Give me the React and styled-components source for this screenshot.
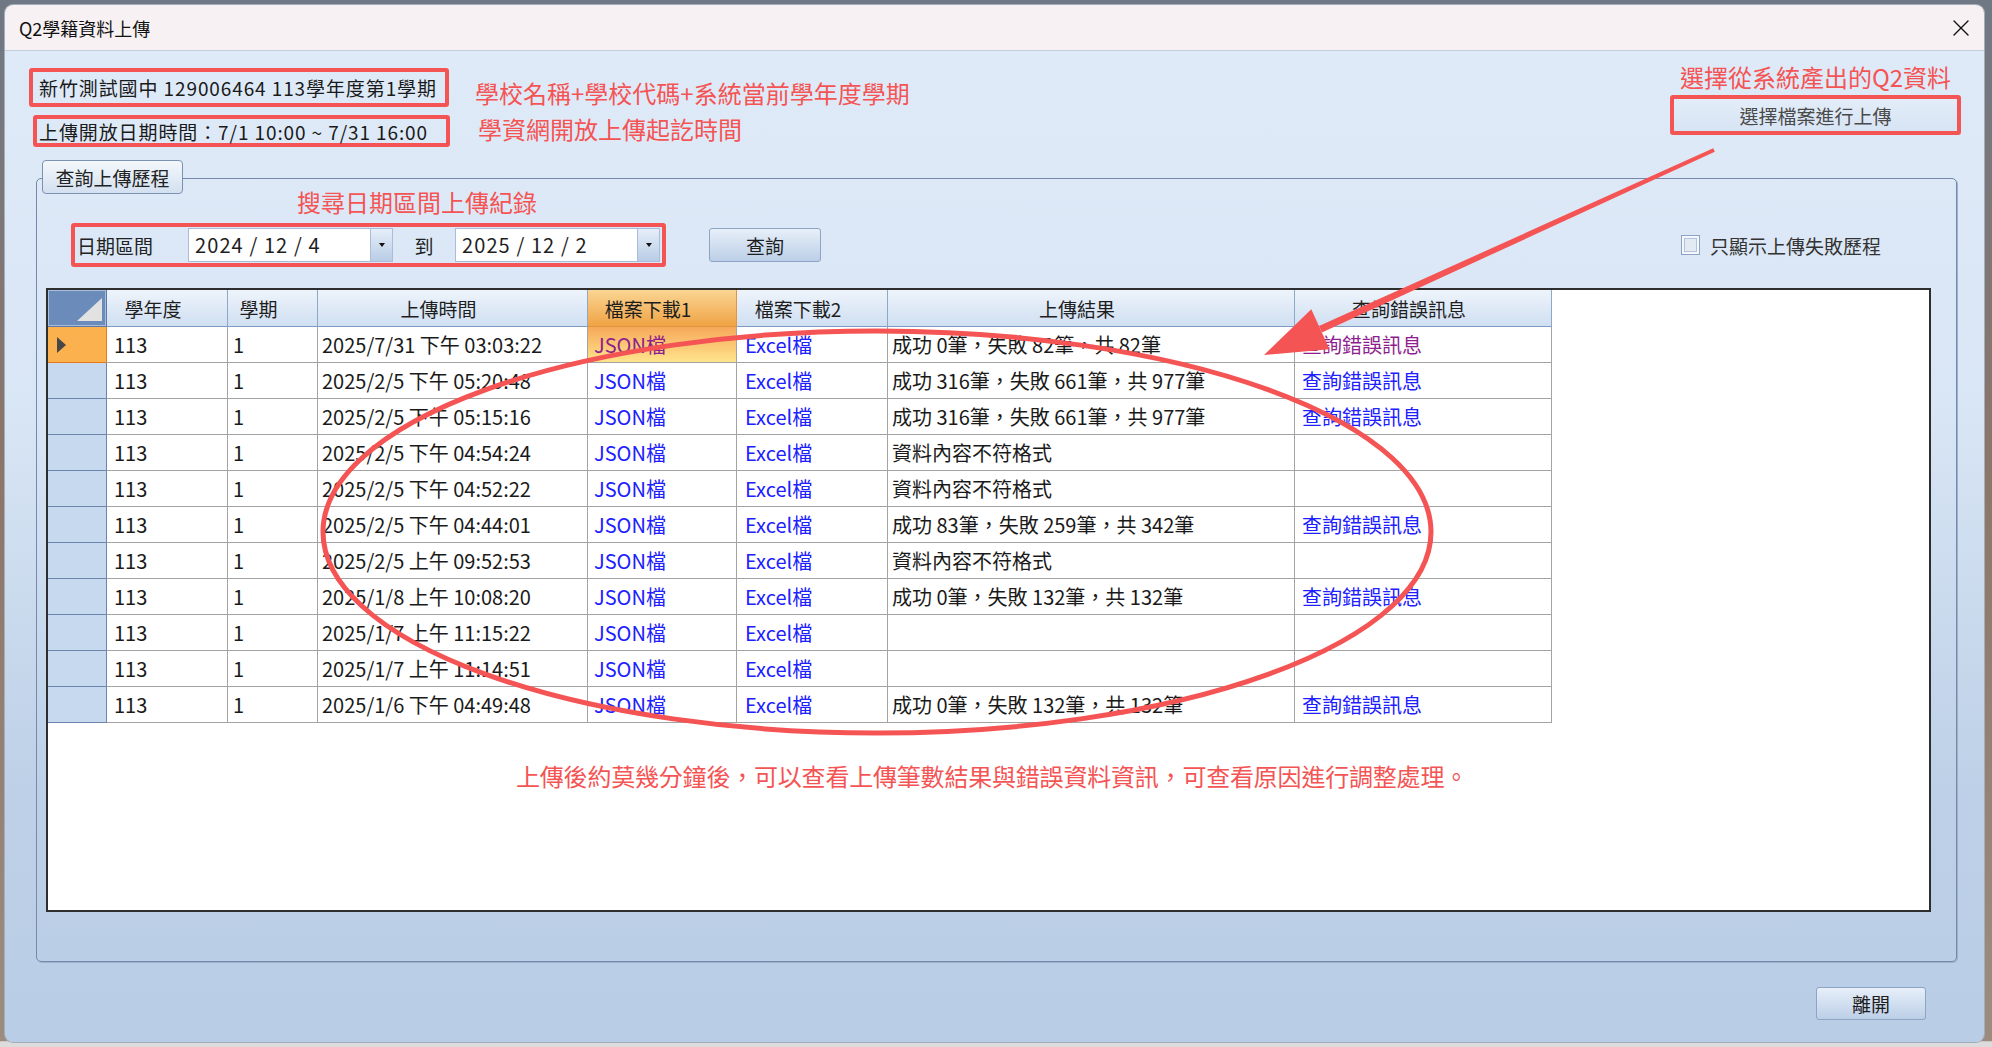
import React from "react";
import styled, { createGlobalStyle } from "styled-components";
import { X } from "lucide-react";

const RED = "#f45454";
const FONT = `"Noto Sans CJK TC", "Noto Sans", sans-serif`;

const GlobalStyle = createGlobalStyle`
  html, body { margin: 0; padding: 0; }
  body { font-family: ${FONT}; }
  * { box-sizing: border-box; }
`;

const Desktop = styled.div`
  width: 1992px;
  height: 1047px;
  padding: 5px 8px 5px 5px;
  display: flex;
  background: linear-gradient(180deg, #6f7884 0%, #8c7569 45%, #9c8c80 99.4%, #dcdcdc 99.5%);
  overflow: hidden;
`;

const Window = styled.div`
  flex: 1;
  display: flex;
  flex-direction: column;
  border-radius: 8px;
  overflow: hidden;
  box-shadow: 0 0 0 1px #a4aebb;
`;

const TitleBar = styled.div`
  height: 46px;
  flex: none;
  display: flex;
  align-items: center;
  justify-content: space-between;
  padding: 0 9px 0 14px;
  background: #f7f1f3;
  border-bottom: 1px solid #c3cedc;
  font-size: 18px;
  color: #111;
`;

const Body = styled.div`
  flex: 1;
  position: relative;
  display: flex;
  flex-direction: column;
  background: linear-gradient(180deg, #dfeaf8 0%, #d9e6f5 35%, #bdd0e7 75%, #b9cde6 100%);
`;

const Header = styled.div`
  display: flex;
  justify-content: space-between;
  align-items: flex-start;
  padding: 0 23px 0 24px;
`;

const LeftCol = styled.div`
  padding-top: 17px;
  display: flex;
  flex-direction: column;
  gap: 8px;
`;

const InfoRow = styled.div`
  display: flex;
  align-items: center;
`;

const InfoBox = styled.div`
  width: ${(p) => p.$w}px;
  height: ${(p) => p.$h}px;
  margin-left: ${(p) => p.$ml || 0}px;
  border: 4px solid ${RED};
  border-radius: 3px;
  padding-left: ${(p) => p.$pl}px;
  display: flex;
  align-items: center;
  font-size: 19px;
  letter-spacing: 0.9px;
  color: #1a1a1a;
  white-space: nowrap;
`;

const Note = styled.div`
  font-size: 24px;
  line-height: 28px;
  color: ${RED};
  white-space: nowrap;
  margin-left: ${(p) => p.$ml || 0}px;
  margin-top: ${(p) => p.$mt || 0}px;
`;

const RightCol = styled.div`
  padding-top: 12px;
  width: 291px;
  display: flex;
  flex-direction: column;
  align-items: center;
  gap: 4px;
`;

const SelectBox = styled.div`
  width: 291px;
  height: 40px;
  border: 4px solid ${RED};
  border-radius: 3px;
  display: flex;
  align-items: center;
  justify-content: center;
  font-size: 19px;
  color: #4a4a4a;
  background: linear-gradient(180deg, #e3edf9, #d7e4f4);
`;

const Group = styled.div`
  position: relative;
  margin: 13px 27px 0 31px;
  padding-top: 18px;
`;

const Tab = styled.div`
  position: absolute;
  top: 0;
  left: 6px;
  width: 141px;
  height: 34px;
  border: 1px solid #7d92b3;
  border-radius: 4px;
  background: linear-gradient(180deg, #f4f8fc, #d3e0f0);
  display: flex;
  align-items: center;
  justify-content: center;
  font-size: 19px;
  color: #222;
  z-index: 1;
`;

const Frame = styled.div`
  height: 784px;
  border: 1px solid #7489ab;
  border-radius: 5px;
  box-shadow: 1px 1px 0 #9fb2cc;
  padding: 9px 25px 0 9px;
  display: flex;
  flex-direction: column;
`;

const ToolRow = styled.div`
  margin-top: 7px;
  height: 44px;
  display: flex;
  align-items: center;
`;

const FilterBox = styled.div`
  margin-left: 25px;
  width: 595px;
  height: 44px;
  border: 4px solid ${RED};
  border-radius: 3px;
  display: flex;
  align-items: center;
`;

const FilterLabel = styled.div`
  width: ${(p) => p.$w}px;
  padding-left: ${(p) => p.$pl || 0}px;
  text-align: ${(p) => (p.$center ? "center" : "left")};
  font-size: 19px;
  color: #222;
`;

const DatePicker = styled.div`
  width: 205px;
  height: 34px;
  border: 1px solid #a9bdd8;
  background: #fff;
  display: flex;
`;

const DateText = styled.div`
  flex: 1;
  padding-left: 6px;
  font-size: 20px;
  letter-spacing: 1.1px;
  line-height: 32px;
  color: #1e1e1e;
`;

const DropBtn = styled.div`
  width: 22px;
  border-left: 1px solid #a9bdd8;
  background: linear-gradient(180deg, #e6eef9, #b9cde6);
  display: flex;
  align-items: center;
  justify-content: center;
  &::after {
    content: "";
    border-left: 3px solid transparent;
    border-right: 3px solid transparent;
    border-top: 4px solid #111;
  }
`;

const Button = styled.div`
  width: ${(p) => p.$w}px;
  height: ${(p) => p.$h}px;
  margin-left: ${(p) => p.$ml || 0}px;
  border: 1px solid #8ea4c4;
  border-radius: 3px;
  background: linear-gradient(180deg, #e7eff9, #bccfe7);
  display: flex;
  align-items: center;
  justify-content: center;
  font-size: 19px;
  color: #1e1e1e;
`;

const CheckWrap = styled.div`
  margin-left: 860px;
  display: flex;
  align-items: center;
  gap: 10px;
  font-size: 19px;
  color: #333;
`;

const CheckBox = styled.div`
  width: 19px;
  height: 20px;
  border: 1px solid #8ea4c4;
  background: #e4eaf3;
  box-shadow: inset 0 0 0 2px #f4f7fb, inset 0 0 0 3px #b4c3d8;
`;

const Grid = styled.div`
  margin-top: 21px;
  width: 1885px;
  height: 624px;
  border: 2px solid #2e2e2e;
  background: #fff;
`;

const COLS = "59px 121px 90px 270px 149px 151px 407px 257px";

const HeadRow = styled.div`
  display: grid;
  grid-template-columns: ${COLS};
  height: 37px;
`;

const CornerCell = styled.div`
  background: #6b8cba;
  border-right: 1px solid #5b78a4;
  border-bottom: 1px solid #5b78a4;
  box-shadow: inset 0 0 0 1px #a8bedc;
  display: flex;
  align-items: flex-end;
  justify-content: flex-end;
  padding: 0 4px 5px 0;
`;

const HeadCell = styled.div`
  border-right: 1px solid ${(p) => (p.$active ? "#e0963e" : "#90a8c8")};
  border-bottom: 1px solid ${(p) => (p.$active ? "#e0963e" : "#7f9cc2")};
  background: ${(p) =>
    p.$active
      ? "linear-gradient(180deg, #fad594, #f0a344)"
      : "linear-gradient(180deg, #eef4fb, #d0dff2)"};
  display: flex;
  align-items: center;
  justify-content: center;
  padding-right: 28px;
  font-size: 19px;
  color: #1e1e1e;
  white-space: nowrap;
`;

const DataRow = styled.div`
  display: grid;
  grid-template-columns: ${COLS};
  height: 36px;
`;

const RowHead = styled.div`
  background: ${(p) => (p.$active ? "#fbb14e" : "#c7d9ef")};
  border-right: 1px solid ${(p) => (p.$active ? "#e47c1c" : "#6d86ab")};
  border-bottom: 1px solid ${(p) => (p.$active ? "#e47c1c" : "#6d86ab")};
  display: flex;
  align-items: center;
  padding-left: 9px;
`;

const Arrow = styled.div`
  width: 0;
  height: 0;
  border-top: 8px solid transparent;
  border-bottom: 8px solid transparent;
  border-left: 9px solid #474747;
`;

const Cell = styled.div`
  border-right: 1px solid #a3a3a3;
  border-bottom: 1px solid #a3a3a3;
  padding-left: ${(p) => p.$pl}px;
  display: flex;
  align-items: center;
  font-size: 20px;
  color: ${(p) => p.$color || "#1a1a1a"};
  white-space: nowrap;
  overflow: hidden;
  background: ${(p) => (p.$sel ? "linear-gradient(180deg, #f6a85a, #ffe48c)" : "#fff")};
`;

const GridNote = styled(Note)`
  margin-top: 38px;
  margin-left: 468px;
  line-height: 30px;
  letter-spacing: -0.2px;
`;

const Footer = styled.div`
  display: flex;
  justify-content: flex-end;
  padding: 25px 58px 0 0;
`;

const Overlay = styled.svg`
  position: absolute;
  inset: 0;
  width: 100%;
  height: 100%;
  pointer-events: none;
  z-index: 5;
`;

const LINK = "#2020ff";
const VISITED = "#8e1e8e";

const rows = [
  ["2025/7/31 下午 03:03:22", "成功 0筆，失敗 82筆，共 82筆", true],
  ["2025/2/5 下午 05:20:48", "成功 316筆，失敗 661筆，共 977筆", true],
  ["2025/2/5 下午 05:15:16", "成功 316筆，失敗 661筆，共 977筆", true],
  ["2025/2/5 下午 04:54:24", "資料內容不符格式", false],
  ["2025/2/5 下午 04:52:22", "資料內容不符格式", false],
  ["2025/2/5 下午 04:44:01", "成功 83筆，失敗 259筆，共 342筆", true],
  ["2025/2/5 上午 09:52:53", "資料內容不符格式", false],
  ["2025/1/8 上午 10:08:20", "成功 0筆，失敗 132筆，共 132筆", true],
  ["2025/1/7 上午 11:15:22", "", false],
  ["2025/1/7 上午 11:14:51", "", false],
  ["2025/1/6 下午 04:49:48", "成功 0筆，失敗 132筆，共 132筆", true],
];

const heads = ["學年度", "學期", "上傳時間", "檔案下載1", "檔案下載2", "上傳結果", "查詢錯誤訊息"];

// arrow geometry (body coords)
const S = [1709, 99];
const T = [1259, 304];
const arrowPoly = () => {
  const dx = T[0] - S[0];
  const dy = T[1] - S[1];
  const len = Math.hypot(dx, dy);
  const u = [dx / len, dy / len];
  const n = [-u[1], u[0]];
  const B = [T[0] - 62 * u[0], T[1] - 62 * u[1]];
  const p = (c, k) => `${(c[0] + k * n[0]).toFixed(1)},${(c[1] + k * n[1]).toFixed(1)}`;
  return {
    shaft: [p(S, 2), p(B, 3.5), p(B, -3.5), p(S, -2)].join(" "),
    head: [`${T[0]},${T[1]}`, p(B, 22), p(B, -22)].join(" "),
  };
};

export default function App() {
  const ar = arrowPoly();
  return (
    <Desktop>
      <GlobalStyle />
      <Window>
        <TitleBar>
          <span>Q2學籍資料上傳</span>
          <X size={28} strokeWidth={1.2} color="#111" />
        </TitleBar>
        <Body>
          <Header>
            <LeftCol>
              <InfoRow>
                <InfoBox $w={420} $h={39} $pl={6}>新竹測試國中 129006464 113學年度第1學期</InfoBox>
                <Note $ml={26} $mt={10}>學校名稱+學校代碼+系統當前學年度學期</Note>
              </InfoRow>
              <InfoRow>
                <InfoBox $w={417} $h={32} $ml={4} $pl={2}>上傳開放日期時間：7/1 10:00 ~ 7/31 16:00</InfoBox>
                <Note $ml={28} $mt={-5}>學資網開放上傳起訖時間</Note>
              </InfoRow>
            </LeftCol>
            <RightCol>
              <Note>選擇從系統產出的Q2資料</Note>
              <SelectBox>選擇檔案進行上傳</SelectBox>
            </RightCol>
          </Header>

          <Group>
            <Tab>查詢上傳歷程</Tab>
            <Frame>
              <Note $ml={251}>搜尋日期區間上傳紀錄</Note>
              <ToolRow>
                <FilterBox>
                  <FilterLabel $w={113} $pl={2}>日期區間</FilterLabel>
                  <DatePicker>
                    <DateText>2024 / 12 / 4</DateText>
                    <DropBtn />
                  </DatePicker>
                  <FilterLabel $w={62} $center>到</FilterLabel>
                  <DatePicker>
                    <DateText>2025 / 12 / 2</DateText>
                    <DropBtn />
                  </DatePicker>
                </FilterBox>
                <Button $w={112} $h={34} $ml={43}>查詢</Button>
                <CheckWrap>
                  <CheckBox />
                  只顯示上傳失敗歷程
                </CheckWrap>
              </ToolRow>
              <Grid>
                <HeadRow>
                  <CornerCell>
                    <svg width="25" height="23" viewBox="0 0 25 23">
                      <polygon points="0,23 25,0 25,23" fill="#e2e2e2" />
                    </svg>
                  </CornerCell>
                  {heads.map((h, i) => (
                    <HeadCell key={h} $active={i === 3}>{h}</HeadCell>
                  ))}
                </HeadRow>
                {rows.map(([time, result, hasErr], i) => {
                  const first = i === 0;
                  return (
                    <DataRow key={i}>
                      <RowHead $active={first}>{first && <Arrow />}</RowHead>
                      <Cell $pl={7}>113</Cell>
                      <Cell $pl={5}>1</Cell>
                      <Cell $pl={4}>{time}</Cell>
                      <Cell $pl={6} $sel={first} $color={first ? VISITED : LINK}>JSON檔</Cell>
                      <Cell $pl={8} $color={LINK}>Excel檔</Cell>
                      <Cell $pl={4}>{result}</Cell>
                      <Cell $pl={7} $color={first ? VISITED : LINK}>{hasErr ? "查詢錯誤訊息" : ""}</Cell>
                    </DataRow>
                  );
                })}
                <GridNote>上傳後約莫幾分鐘後，可以查看上傳筆數結果與錯誤資料資訊，可查看原因進行調整處理。</GridNote>
              </Grid>
            </Frame>
          </Group>

          <Footer>
            <Button $w={110} $h={33}>離開</Button>
          </Footer>

          <Overlay viewBox="0 0 1979 991">
            <ellipse cx="872" cy="481" rx="554" ry="201" fill="none" stroke={RED} strokeWidth="5" />
            <polygon points={ar.shaft} fill={RED} />
            <polygon points={ar.head} fill={RED} />
          </Overlay>
        </Body>
      </Window>
    </Desktop>
  );
}
